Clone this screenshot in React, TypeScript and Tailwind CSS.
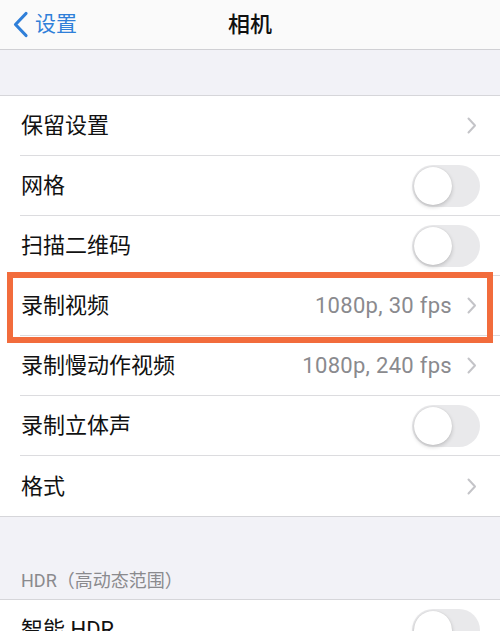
import React from "react";

const font = { fontFamily: '"Roboto", "Noto Sans CJK SC", sans-serif' };

function Chevron() {
  return (
    <svg width="10" height="17" viewBox="0 0 10 17" className="shrink-0">
      <path d="M1.5 1.5 L8 8.5 L1.5 15.5" fill="none" stroke="#c4c4c8" strokeWidth="2" strokeLinecap="round" strokeLinejoin="round" />
    </svg>
  );
}

function Toggle() {
  return (
    <div className="w-[68px] h-[42px] rounded-full bg-[#e9e9eb] p-[2px] flex items-center shrink-0">
      <div className="w-[38px] h-[38px] rounded-full bg-white shadow-[0_2px_4px_rgba(0,0,0,0.18),0_0_1px_rgba(0,0,0,0.15)]" />
    </div>
  );
}

type RowProps = { label: string; value?: string; kind: "chevron" | "toggle"; last?: boolean };

function Row({ label, value, kind, last }: RowProps) {
  return (
    <div className="pl-[20px] bg-white">
      <div className={`h-[60px] flex items-center pr-[20px] ${last ? "" : "border-b border-[#dcdcdf]"}`}>
        <span className="text-[22px] text-[#111111] pl-[1px]">{label}</span>
        <div className="flex-1" />
        {value && <span className="text-[22px] text-[#8a8a8e] mr-[15px] tracking-[0.3px]">{value}</span>}
        {kind === "chevron" ? <div className="pr-[3px]"><Chevron /></div> : <Toggle />}
      </div>
    </div>
  );
}

export default function App() {
  return (
    <div className="w-[500px] h-[631px] overflow-hidden bg-[#f2f2f7] relative" style={font}>
      <div className="h-[50px] bg-[#fafafa] border-b border-[#d0d0d4] relative flex items-center">
        <div className="flex items-center pl-[12px] text-[#2f7fd9]">
          <svg width="17" height="27" viewBox="0 0 17 27">
            <path d="M14 2.5 L3.5 13.5 L14 24.5" fill="none" stroke="#2f7fd9" strokeWidth="3.2" strokeLinecap="round" strokeLinejoin="round" />
          </svg>
          <span className="text-[21px] ml-[6px] leading-none">设置</span>
        </div>
        <div className="absolute left-0 right-0 top-0 h-[49px] flex items-center justify-center pointer-events-none">
          <span className="text-[22px] font-medium text-[#111111]">相机</span>
        </div>
      </div>
      <div className="h-[45px]" />
      <div className="border-t border-b border-[#d6d6da] bg-white relative">
        <Row label="保留设置" kind="chevron" />
        <Row label="网格" kind="toggle" />
        <Row label="扫描二维码" kind="toggle" />
        <div className="relative">
          <Row label="录制视频" value="1080p, 30 fps" kind="chevron" />
          <div className="absolute left-[7px] right-[7px] top-[-4px] h-[71px] border-[6px] border-[#f26c3c] pointer-events-none" />
        </div>
        <Row label="录制慢动作视频" value="1080p, 240 fps" kind="chevron" />
        <Row label="录制立体声" kind="toggle" />
        <Row label="格式" kind="chevron" last />
      </div>
      <div className="h-[82px] flex items-end pl-[21px] pb-[5px]">
        <span className="text-[18px] text-[#8a8a8e]">HDR（高动态范围）</span>
      </div>
      <div className="border-t border-[#d6d6da] bg-white">
        <Row label="智能 HDR" kind="toggle" />
      </div>
    </div>
  );
}
